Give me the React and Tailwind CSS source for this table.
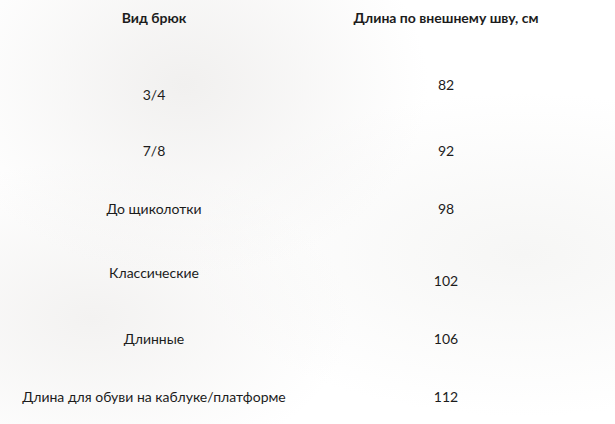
const rows = [
  { name: '3/4', len: '82', nameTop: 'pt-[10px]', lenTop: '', h: 'h-[66px]' },
  { name: '7/8', len: '92', nameTop: '', lenTop: '', h: 'h-[58px]' },
  { name: 'До щиколотки', len: '98', nameTop: '', lenTop: '', h: 'h-[64px]' },
  { name: 'Классические', len: '102', nameTop: '', lenTop: 'pt-[8px]', h: 'h-[66px]' },
  { name: 'Длинные', len: '106', nameTop: '', lenTop: '', h: 'h-[58px]' },
  { name: 'Длина для обуви на каблуке/платформе', len: '112', nameTop: '', lenTop: '', h: 'h-[36px]' },
];

export default function App() {
  return (
    <div className="w-[615px] h-[424px] overflow-hidden bg-white bg-[radial-gradient(ellipse_at_30%_20%,#f1f0ef_0%,transparent_40%),radial-gradient(ellipse_at_15%_75%,#f3f2f1_0%,transparent_35%),radial-gradient(ellipse_at_85%_60%,#f6f6f5_0%,transparent_45%)] text-[#1c1c1c] font-['Lato','Liberation_Sans',sans-serif]">
      <div className="pt-[8px]">
        <div className="grid grid-cols-[308px_276px] h-[67px] text-[14px] font-bold leading-5 text-center">
          <div>Вид брюк</div>
          <div>Длина по внешнему шву, см</div>
        </div>
        {rows.map((r) => (
          <div key={r.name} className={`grid grid-cols-[308px_276px] ${r.h} text-[14px] leading-5 text-center`}>
            <div className={r.nameTop}>{r.name}</div>
            <div className={r.lenTop}>{r.len}</div>
          </div>
        ))}
      </div>
    </div>
  );
}
